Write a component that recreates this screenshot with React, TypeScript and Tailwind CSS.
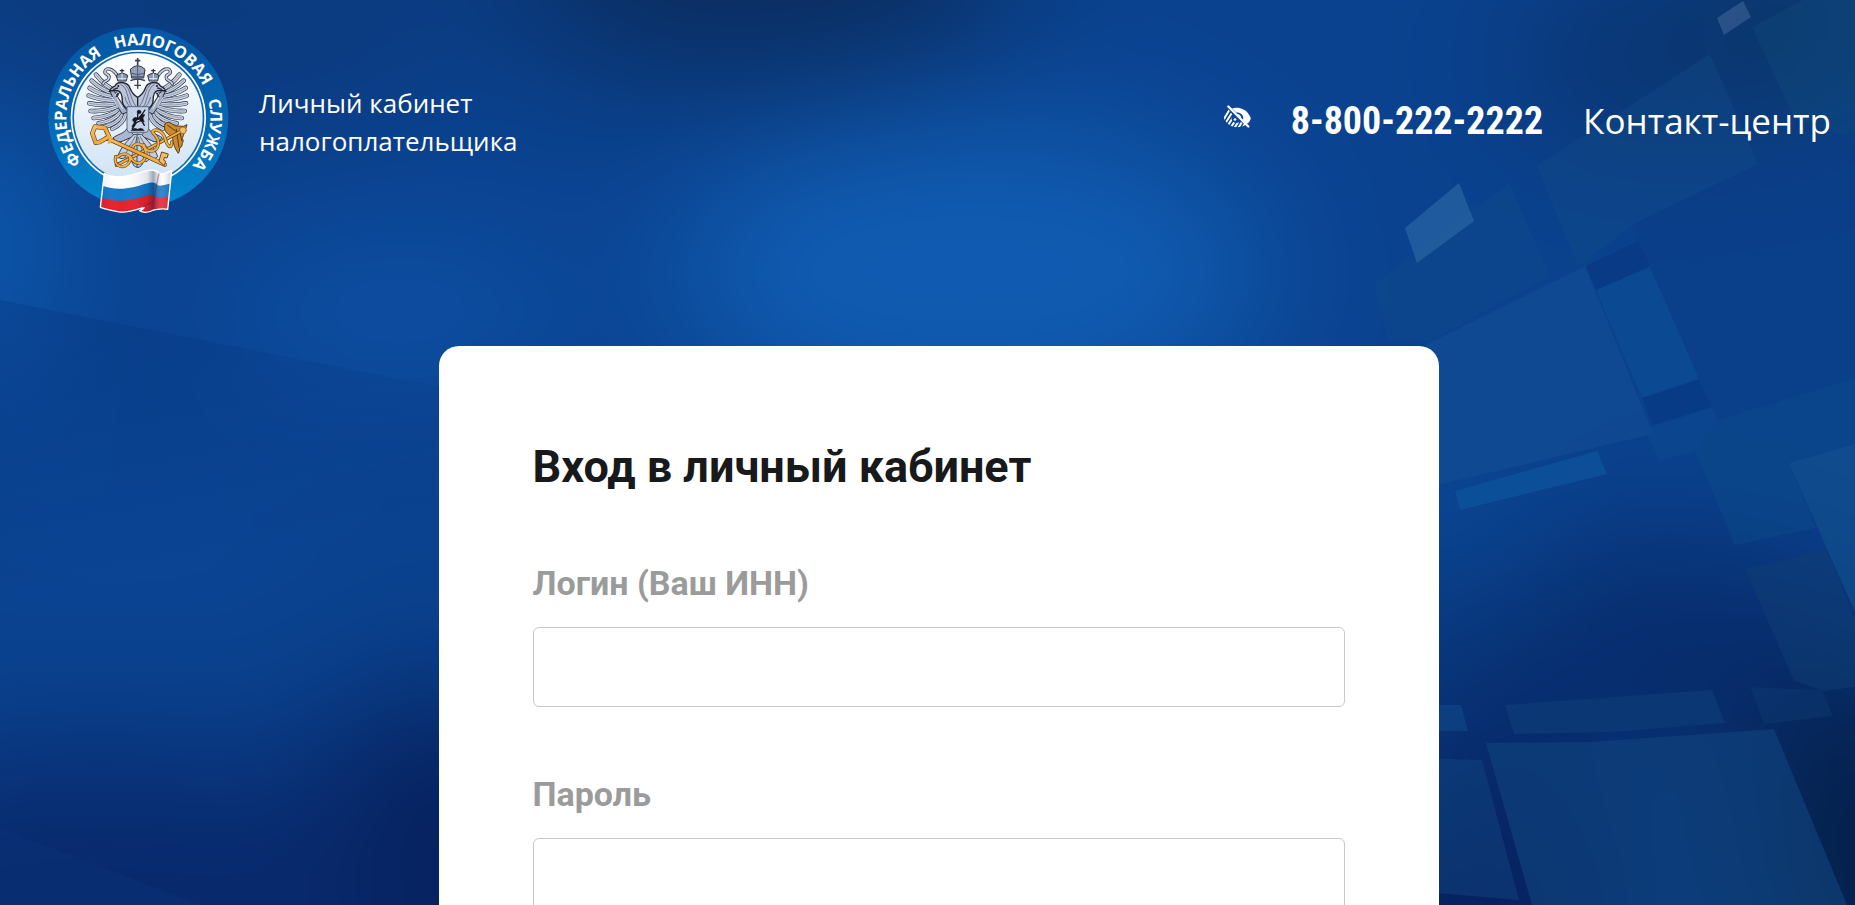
import { type FormEvent, useState } from "react";

interface Shape {
	points: string;
	fill: string;
	opacity: number;
}

const TILES: Shape[] = [
	{ points: "1717,18 1743,1 1751,17 1724,35", fill: "#7fa0cc", opacity: 0.26 },
	{ points: "1752,27 1803,0 1855,0 1855,140 1794,118", fill: "#0f4d7c", opacity: 0.35 },
	{ points: "1632,225 1758,164 1855,130 1855,378 1718,420", fill: "#0a3c84", opacity: 0.5 },
	{ points: "1537,166 1710,54 1758,164 1632,225 1578,267", fill: "#124c86", opacity: 0.4 },
	{ points: "1374,283 1509,183 1550,276 1431,341 1389,341", fill: "#0e4b86", opacity: 0.4 },
	{ points: "1405,228 1459,183 1474,221 1417,263", fill: "#3f7fb4", opacity: 0.4 },
	{ points: "1425,345 1585,266 1653,434 1425,488", fill: "#144f94", opacity: 0.5 },
	{ points: "1586,266 1638,241 1650,266 1596,290", fill: "#06307a", opacity: 0.4 },
	{ points: "1596,290 1650,267 1699,379 1642,398", fill: "#0b4f96", opacity: 0.6 },
	{ points: "1642,398 1699,379 1711,407 1653,425", fill: "#06327c", opacity: 0.45 },
	{ points: "1645,429 1711,408 1718,421 1695,451 1659,461", fill: "#0b4a90", opacity: 0.5 },
	{ points: "1695,451 1718,420 1855,378 1855,444 1789,463 1816,528 1735,545", fill: "#0b4888", opacity: 0.55 },
	{ points: "1455,491 1597,451 1607,474 1460,510", fill: "#0d58a0", opacity: 0.6 },
	{ points: "1789,463 1855,444 1855,612", fill: "#12528e", opacity: 0.6 },
	{ points: "1745,569 1826,550 1855,618 1855,687 1824,691 1794,681", fill: "#0f3d74", opacity: 0.5 },
	{ points: "1425,705 1461,705 1468,731 1425,731", fill: "#0f4888", opacity: 0.6 },
	{ points: "1505,705 1712,690 1725,723 1612,732 1514,734", fill: "#10427c", opacity: 0.5 },
	{ points: "1750,687 1822,690 1833,716 1764,724", fill: "#103f78", opacity: 0.35 },
	{ points: "1486,743 1590,742 1774,729 1847,905 1532,905", fill: "#0f427c", opacity: 0.65 },
	{ points: "1425,758 1482,760 1519,900 1425,892", fill: "#0f4480", opacity: 0.5 },
];

function Backdrop() {
	return (
		<svg
			aria-hidden="true"
			className="absolute inset-0 -z-10 h-full w-full"
			viewBox="0 0 1855 905"
			preserveAspectRatio="xMidYMid slice"
		>
			<defs>
				<filter
					id="soft"
					filterUnits="userSpaceOnUse"
					x="-300"
					y="-300"
					width="2455"
					height="1505"
					colorInterpolationFilters="sRGB"
				>
					<feGaussianBlur stdDeviation="70" />
				</filter>
				<linearGradient id="fold" x1="0" y1="0" x2="0.15" y2="1">
					<stop offset="0" stopColor="#04296c" stopOpacity="0.24" />
					<stop offset="0.5" stopColor="#04296c" stopOpacity="0" />
				</linearGradient>
			</defs>
			<rect width="1855" height="905" fill="#0a428f" />
			<g filter="url(#soft)">
				<rect x="-300" y="-300" width="2455" height="1505" fill="#0a428f" />
				<ellipse cx="760" cy="-30" rx="260" ry="110" fill="#0a2c5e" />
				<ellipse cx="180" cy="10" rx="300" ry="120" fill="#0b3a7e" />
				<ellipse cx="970" cy="270" rx="300" ry="150" fill="#105cb2" />
				<ellipse cx="-20" cy="240" rx="70" ry="150" fill="#0c5cb4" />
				<ellipse cx="400" cy="310" rx="190" ry="70" fill="#0d50a6" />
				<ellipse cx="120" cy="500" rx="200" ry="90" fill="#0a4594" />
				<ellipse cx="440" cy="880" rx="150" ry="190" fill="#061f5a" />
				<ellipse cx="100" cy="900" rx="320" ry="150" fill="#08296c" />
				<ellipse cx="1640" cy="60" rx="130" ry="90" fill="#0a3470" />
				<ellipse cx="1800" cy="20" rx="110" ry="110" fill="#0b3568" />
				<ellipse cx="1640" cy="660" rx="280" ry="120" fill="#072c6c" />
				<ellipse cx="1470" cy="920" rx="190" ry="150" fill="#07215e" />
				<ellipse cx="1880" cy="860" rx="150" ry="180" fill="#05204a" />
				<ellipse cx="1470" cy="540" rx="60" ry="100" fill="#0a4896" />
			</g>
			<polygon points="0,300 470,393 470,905 0,905" fill="url(#fold)" />
			<polygon points="0,828 200,905 0,905" fill="#0c357c" opacity="0.3" />
			{TILES.map((tile) => (
				<polygon
					key={tile.points}
					points={tile.points}
					fill={tile.fill}
					opacity={tile.opacity}
				/>
			))}
		</svg>
	);
}

const FEATHERS = [
	"M262 246 Q222 228 197 194",
	"M258 254 Q212 240 184 212",
	"M256 262 Q208 254 178 234",
	"M256 272 Q210 270 175 257",
	"M258 282 Q212 288 177 280",
	"M262 290 Q220 306 181 303",
	"M268 298 Q232 322 190 324",
	"M274 304 Q248 334 205 340",
	"M280 310 Q262 342 224 350",
	"M286 314 Q278 342 246 356",
];

function EagleHalf() {
	return (
		<g strokeLinecap="round" strokeLinejoin="round">
			{FEATHERS.map((d) => (
				<g key={d} fill="none">
					<path d={d} stroke="#2b303c" strokeWidth="14" />
					<path d={d} stroke="#c9d3e6" strokeWidth="10" />
					<path d={d} stroke="#7a869f" strokeWidth="2" />
				</g>
			))}
			<path d="M248 238 Q262 262 292 306 L276 312 Q250 280 240 246Z" fill="#a3afc8" stroke="#2b303c" strokeWidth="3" />
			<path d="M246 262 L262 292 M254 252 L276 296" stroke="#dde5f2" strokeWidth="3" />
			{/* ribbon beside the crown */}
			<path d="M262 198 C248 176 228 170 224 184 C220 196 240 190 236 204 C234 216 220 210 218 222" fill="none" stroke="#3d4454" strokeWidth="10" />
			<path d="M262 198 C248 176 228 170 224 184 C220 196 240 190 236 204 C234 216 220 210 218 222" fill="none" stroke="#c8d2e4" strokeWidth="5" />
			{/* neck and head */}
			<path d="M322 262 C304 254 300 236 296 228 C284 214 260 214 254 228 C248 232 240 232 237 244 C246 240 254 242 262 242 C274 244 276 256 276 274 C276 286 284 292 292 298 L322 298Z" fill="#b9c4d9" stroke="#20242e" strokeWidth="4" />
			<path d="M272 224 C294 232 288 266 306 292 M282 222 C302 238 298 264 316 288 M284 262 C286 276 294 284 300 292" fill="none" stroke="#6b768e" strokeWidth="3" />
			<path d="M264 250 L258 260 M250 238 L262 234" stroke="#2b303c" strokeWidth="4" />
			<circle cx="264" cy="228" r="3" fill="#14171d" />
			{/* small crown */}
			<path d="M262 212 L258 196 Q275 184 292 196 L288 212Z" fill="#8795b2" stroke="#2b303c" strokeWidth="3" />
			<path d="M264 206 H287 M275 190 V208" stroke="#e2e9f4" strokeWidth="3" />
			<path d="M275 188 V178 M270 182 H280" stroke="#2b303c" strokeWidth="4" />
			{/* leg and tail */}
			<path d="M290 356 C280 372 262 372 248 384 C256 396 270 398 280 392 L312 378Z" fill="#aab6cf" stroke="#2b303c" strokeWidth="3" />
			<path d="M310 374 C292 392 272 410 262 440 Q276 452 286 440 Q292 462 304 452 Q310 474 324 472 V374Z" fill="#c3cee2" stroke="#3c4352" strokeWidth="3" />
			<path d="M314 380 C304 402 288 420 284 440 M320 382 C312 412 304 432 304 450 M276 412 Q290 420 300 404" fill="none" stroke="#67738c" strokeWidth="3" />
		</g>
	);
}

function Emblem() {
	return (
		<svg
			role="img"
			aria-label="Федеральная налоговая служба"
			viewBox="50 48 549 567"
			className="h-[189px] w-[183px] shrink-0"
		>
			<defs>
				<linearGradient id="ring" x1="0" y1="0" x2="0" y2="1">
					<stop offset="0" stopColor="#0457a4" />
					<stop offset="0.5" stopColor="#0467b3" />
					<stop offset="1" stopColor="#0388d0" />
				</linearGradient>
				<linearGradient id="disc" x1="0" y1="0" x2="0" y2="1">
					<stop offset="0" stopColor="#ffffff" />
					<stop offset="0.45" stopColor="#eaf2fa" />
					<stop offset="1" stopColor="#cfe3f5" />
				</linearGradient>
				<linearGradient id="gold" x1="0" y1="0" x2="1" y2="1">
					<stop offset="0" stopColor="#f7c274" />
					<stop offset="0.5" stopColor="#e9a43c" />
					<stop offset="1" stopColor="#f3b85c" />
				</linearGradient>
				<linearGradient id="shade" x1="0" y1="0" x2="1" y2="0">
					<stop offset="0" stopColor="#001a4a" stopOpacity="0.1" />
					<stop offset="0.3" stopColor="#ffffff" stopOpacity="0" />
					<stop offset="0.66" stopColor="#001a4a" stopOpacity="0.12" />
					<stop offset="0.74" stopColor="#001a4a" stopOpacity="0.38" />
					<stop offset="0.86" stopColor="#ffffff" stopOpacity="0.12" />
					<stop offset="1" stopColor="#001a4a" stopOpacity="0.25" />
				</linearGradient>
				<path id="motto" d="M324 538 A216 216 0 0 1 324 106 A216 216 0 0 1 324 538" />
				<clipPath id="flag">
					<path d="M222 490 C262 512 306 494 342 484 C362 478 380 480 386 490 C398 496 412 486 424 482 L412 598 C396 594 382 598 370 600 C354 608 340 610 328 602 C334 600 340 598 342 592 C316 600 296 608 270 606 C248 602 230 600 210 592Z" />
				</clipPath>
			</defs>
			<circle cx="324" cy="322" r="270" fill="url(#ring)" />
			<circle cx="324" cy="323" r="203" fill="#ffffff" />
			<circle cx="324" cy="323" r="198" fill="#0868b4" />
			<circle cx="324" cy="323" r="193" fill="url(#disc)" />
			<g className="fill-white font-['Open_Sans',sans-serif] text-[49px] font-bold">
				<text>
					<textPath href="#motto" startOffset="194">ФЕДЕРАЛЬНАЯ</textPath>
				</text>
				<text>
					<textPath href="#motto" startOffset="608">НАЛОГОВАЯ</textPath>
				</text>
				<text>
					<textPath href="#motto" startOffset="964">СЛУЖБА</textPath>
				</text>
			</g>

			<EagleHalf />
			<g transform="translate(644 0) scale(-1 1)">
				<EagleHalf />
			</g>
			{/* central crown */}
			<path d="M304 204 L300 178 Q322 156 344 178 L340 204Z" fill="#94a1bd" stroke="#2b303c" strokeWidth="3" />
			<path d="M304 190 Q322 198 341 190 M322 164 V202 M306 200 H338" fill="none" stroke="#4f5a72" strokeWidth="3" />
			<path d="M322 166 V144 M314 152 H330" stroke="#3c4352" strokeWidth="5" />
			<path d="M300 212 Q322 202 344 212 M322 206 V236 M312 226 H332" fill="none" stroke="#3c4352" strokeWidth="4" />
			{/* shield with the rider */}
			<path d="M290 290 H355 V358 Q353 368 342 368 H302 Q291 368 290 358Z" fill="#c2d0e8" stroke="#5c6880" strokeWidth="3" />
			<g fill="#14171f" stroke="#14171f" strokeLinecap="round">
				<circle cx="326" cy="306" r="6" />
				<path d="M306 330 Q310 318 324 324 L334 312 L344 314 L338 324 L342 336 L332 334 L314 340Z" />
				<path d="M314 336 L306 350 M334 332 L342 346 M322 312 L322 326 M344 300 L306 356" fill="none" strokeWidth="4" />
				<path d="M302 362 Q310 350 322 358 Q334 350 342 362Z" />
			</g>
			<path d="M312 312 L320 320 M328 330 L318 334" stroke="#e6edf8" strokeWidth="3" />

			{/* staff, serpents and key */}
			<g fill="none" strokeLinecap="round" strokeLinejoin="round">
				<path d="M404 342 C418 326 430 352 442 348 Q462 352 470 344 C464 366 460 372 456 386 Q462 392 456 400 Q456 412 448 414 Q448 426 444 430 C430 412 428 394 426 380 C408 372 398 360 404 342Z" fill="#c98b2c" stroke="#5d3d10" strokeWidth="3" />
				<path d="M412 346 L440 366 M438 358 L446 412 M448 362 L454 392" stroke="#5d3d10" strokeWidth="3" />
				<path d="M258 466 L456 362" stroke="#5d3d10" strokeWidth="10" />
				<path d="M258 466 L456 362" stroke="#f0ae4c" strokeWidth="6" />
				<circle cx="458" cy="361" r="10" fill="#f3bd6c" stroke="#8a5a18" strokeWidth="2" />
				<path d="M256 440 C248 472 286 480 298 454 C306 432 280 426 262 440 M300 440 C318 476 352 456 346 424 C340 396 306 396 306 418 M340 404 C346 430 378 430 384 404 C388 384 372 374 366 366 C372 352 398 364 404 384 C410 410 424 420 424 396" stroke="#6b4612" strokeWidth="10" />
				<path d="M256 440 C248 472 286 480 298 454 C306 432 280 426 262 440 M300 440 C318 476 352 456 346 424 C340 396 306 396 306 418 M340 404 C346 430 378 430 384 404 C388 384 372 374 366 366 C372 352 398 364 404 384 C410 410 424 420 424 396" stroke="#efb04e" strokeWidth="6" />
				<path d="M228 384 L404 464" stroke="#6b4612" strokeWidth="13" />
				<path d="M228 384 L404 464" stroke="url(#gold)" strokeWidth="9" />
				<path d="M386 452 L394 426 L414 432 L410 444 L402 442 L400 450 L406 454 L402 466Z" fill="#f4bd68" stroke="#6b4612" strokeWidth="3" />
				<path d="M194 350 L224 354 L236 380 L208 396 L196 398 L186 370Z" stroke="#6b4612" strokeWidth="14" />
				<path d="M194 350 L224 354 L236 380 L208 396 L196 398 L186 370Z" stroke="url(#gold)" strokeWidth="10" />
				<path d="M242 382 L236 398" stroke="#efb04e" strokeWidth="8" />
			</g>

			{/* tricolour */}
			<g clipPath="url(#flag)">
				<rect x="200" y="470" width="240" height="150" fill="#ffffff" />
				<path d="M200 520 C250 548 310 534 342 522 C362 516 376 514 382 526 C396 530 412 520 440 518 V620 H200Z" fill="#1479c8" />
				<path d="M200 558 C250 582 306 570 338 560 C358 552 372 550 376 564 C392 566 408 558 440 554 V620 H200Z" fill="#e8202b" />
				<rect x="205" y="470" width="222" height="145" fill="url(#shade)" />
			</g>
			<path d="M222 490 C262 512 306 494 342 484 C362 478 380 480 386 490 C398 496 412 486 424 482 L412 598 C396 594 382 598 370 600 C354 608 340 610 328 602 C334 600 340 598 342 592 C316 600 296 608 270 606 C248 602 230 600 210 592Z" fill="none" stroke="#ffffff" strokeWidth="4" strokeLinejoin="round" />
			<path d="M386 490 C380 516 374 548 370 574 C362 582 344 582 340 594" fill="none" stroke="#7d1420" strokeOpacity="0.4" strokeWidth="4" />
		</svg>
	);
}

function LowVisionIcon() {
	return (
		<svg aria-hidden="true" viewBox="30 28 84 68" className="h-[23px] w-7">
			<defs>
				<clipPath id="lower-lid">
					<path d="M46 40 C34 50 30 64 34 70 C44 88 60 95 76 94 C86 93 94 90 99 86 L84 74 C78 84 60 84 56 72 C55 66 56 60 58 56Z" />
				</clipPath>
			</defs>
			<path
				fill="white"
				d="M57 38 C76 32 98 40 106 54 C112 62 115 68 112 72 C110 78 106 82 102 84 L90 73 C94 60 84 49 70 50Z"
			/>
			<path d="M71 57 C78 56 83 62 82 68" fill="none" stroke="white" strokeWidth="5" />
			<g clipPath="url(#lower-lid)" stroke="white" strokeWidth="6">
				<path d="M22 66 L40 36 M30 74 L52 38 M36 84 L60 46 M44 90 L62 62 M52 97 L66 76 M62 100 L76 78 M73 102 L86 80 M84 104 L98 80" />
			</g>
			<circle cx="66" cy="71" r="4" fill="white" />
			<path d="M46 32 L106 92" stroke="white" strokeWidth="7" strokeLinecap="round" />
		</svg>
	);
}

interface FieldProps {
	id: string;
	label: string;
	type: string;
	value: string;
	onChange: (value: string) => void;
}

function Field({ id, label, type, value, onChange }: FieldProps) {
	return (
		<div className="flex flex-col gap-6">
			<label htmlFor={id} className="text-[34px] leading-10 font-bold text-[#9b9b9b]">
				{label}
			</label>
			<input
				id={id}
				type={type}
				value={value}
				onChange={(e) => onChange(e.target.value)}
				className="h-20 w-full rounded-md border border-[#c9c9cc] bg-white px-6 text-3xl text-[#18191b] outline-none focus:border-[#0d5cab]"
			/>
		</div>
	);
}

export default function App() {
	const [login, setLogin] = useState("");
	const [password, setPassword] = useState("");

	const handleSubmit = (e: FormEvent<HTMLFormElement>) => {
		e.preventDefault();
	};

	return (
		<div className="relative isolate flex h-screen flex-col overflow-hidden bg-[#0a428f] font-['Roboto',sans-serif]">
			<Backdrop />
			<header className="flex shrink-0 items-center justify-between pt-[26px] pr-6 pl-[47px] font-['Open_Sans',sans-serif] text-white">
				<a href="#home" className="flex items-center gap-[29px]">
					<Emblem />
					<span className="pt-0.5 text-[26px] leading-[38px]">
						Личный кабинет
						<br />
						налогоплательщика
					</span>
				</a>
				<div className="flex items-center">
					<button type="button" aria-label="Версия для слабовидящих" className="mr-10 cursor-pointer pb-2">
						<LowVisionIcon />
					</button>
					<div className="flex items-baseline gap-10">
						<a
							href="tel:88002222222"
							className="font-['Roboto_Condensed','Liberation_Sans_Narrow',sans-serif] text-[38px] leading-[48px] font-bold"
						>
							8-800-222-2222
						</a>
						<a href="#contacts" className="text-[35px] leading-[48px]">
							Контакт-центр
						</a>
					</div>
				</div>
			</header>
			<main className="mt-[131px] flex shrink-0 justify-center pl-[22px]">
				<form
					onSubmit={handleSubmit}
					className="flex w-full max-w-[1000px] flex-col rounded-[20px] bg-white px-[94px] pt-[97px] pb-24"
				>
					<h1 className="text-[45px] leading-[48px] font-bold text-[#18191b]">
						Вход в личный кабинет
					</h1>
					<div className="mt-[72px] flex flex-col gap-[67px]">
						<Field id="login" label="Логин (Ваш ИНН)" type="text" value={login} onChange={setLogin} />
						<Field id="password" label="Пароль" type="password" value={password} onChange={setPassword} />
					</div>
				</form>
			</main>
		</div>
	);
}
